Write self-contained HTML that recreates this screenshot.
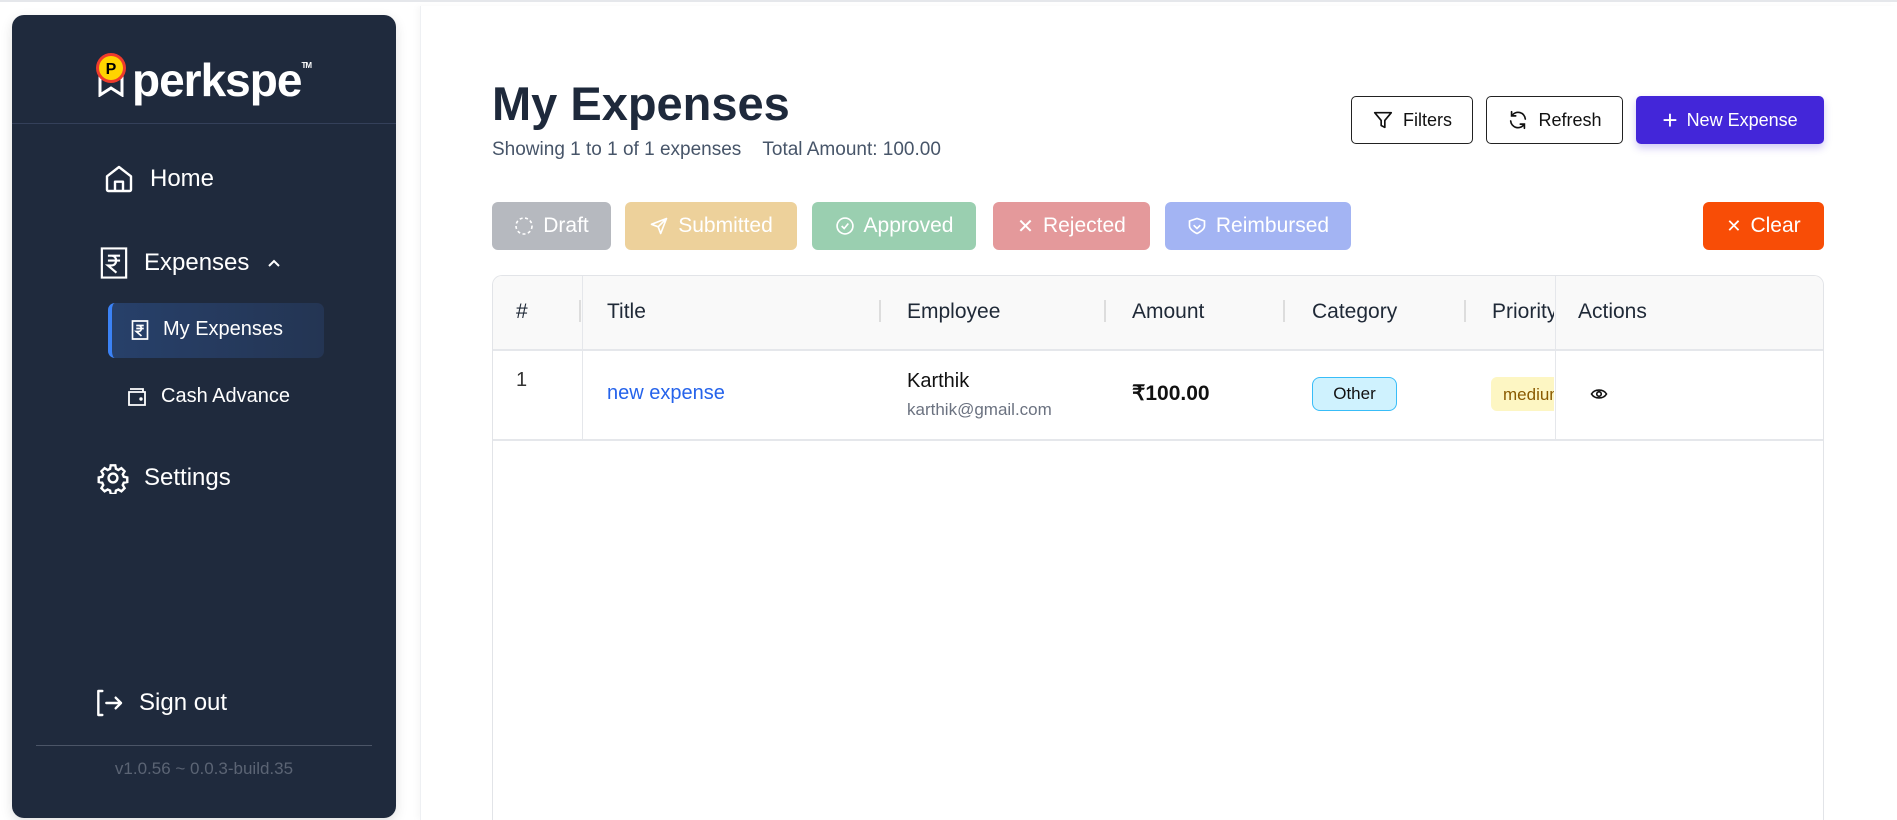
<!DOCTYPE html>
<html style="width:1897px;height:820px;overflow:hidden"><head><style>
*{box-sizing:border-box;margin:0;padding:0}
body{width:1897px;height:820px;overflow:hidden;background:#fff;font-family:"Liberation Sans",sans-serif;position:relative;border-top:2px solid #e5e7eb}
.a{position:absolute}
.sb{left:12px;top:13px;width:384px;height:803px;background:#1f2a3d;border-radius:12px;box-shadow:0 4px 12px rgba(0,0,0,.12);color:#fff}
.nav{position:absolute;display:flex;align-items:center;color:#fff;font-size:24px}
.main{left:420px;top:4px;width:1477px;height:814px;border-left:1px solid #eef0f3;box-shadow:-3px 0 6px rgba(0,0,0,.03)}
.btn{position:absolute;top:94px;height:48px;border:1px solid #222;border-radius:5px;display:flex;align-items:center;justify-content:center;gap:9px;font-size:18px;color:#111;background:#fff}
.chip{position:absolute;top:200px;height:48px;border-radius:6px;display:flex;align-items:center;justify-content:center;gap:9px;color:#fff;font-size:21px}
.th{position:absolute;top:298px;font-size:21px;color:#1f2937}
.sep{position:absolute;top:298px;width:2px;height:22px;background:#ddd}
</style></head><body>
<div class="a sb">
  <div class="a" style="left:82px;top:36px;width:34px;height:40px">
    <svg width="34" height="46" viewBox="0 0 34 46"><path d="M6 24 L6 44 L17 37 L28 44 L28 24" fill="none" stroke="#fff" stroke-width="3"/><circle cx="17" cy="17" r="15" fill="#ef3b2c"/><circle cx="17" cy="17" r="12" fill="#ffd400"/><text x="17" y="23" font-size="16" font-weight="bold" text-anchor="middle" fill="#000" font-family="Liberation Sans">P</text></svg>
  </div>
  <div class="a" style="left:120px;top:38px;font-size:46px;font-weight:bold;letter-spacing:-1px">perkspe<span style="font-size:8px;vertical-align:top;position:relative;top:8px">TM</span></div>
  <div class="a" style="left:0;top:108px;width:384px;height:1px;background:#34405a"></div>
  <div class="nav" style="left:91px;top:148px"><svg width="32" height="32" viewBox="0 0 24 24" fill="none" stroke="#fff" stroke-width="1.8" stroke-linejoin="round"><path d="M3 10 L12 3 L21 10 V20 a1 1 0 0 1-1 1 H4 a1 1 0 0 1-1-1Z M9 21 V14 H15 V21"/></svg><span style="margin-left:15px">Home</span></div>
  <div class="nav" style="left:87px;top:231px"><svg width="30" height="34" viewBox="0 0 24 28" fill="none" stroke="#fff" stroke-width="1.8"><path d="M2 2 H22 V26 H2Z"/><path d="M7 8 H17 M7 12 H17 M10 8 C15 8 15 16 10 16 H7 L14 22"/></svg><span style="margin-left:15px">Expenses</span><svg style="margin-left:18px" width="14" height="10" viewBox="0 0 14 10" fill="none" stroke="#fff" stroke-width="2"><path d="M2 8 L7 3 L12 8"/></svg></div>
  <div class="a" style="left:96px;top:288px;width:216px;height:55px;border-radius:7px;background:linear-gradient(90deg,#27406a,#243553);border-left:4px solid #3b82f6"></div>
  <div class="nav" style="left:119px;top:303px;font-size:20px"><svg width="18" height="22" viewBox="0 0 24 28" fill="none" stroke="#fff" stroke-width="2.2"><path d="M2 2 H22 V26 H2Z"/><path d="M7 8 H17 M7 12 H17 M10 8 C15 8 15 16 10 16 H7 L14 22"/></svg><span style="margin-left:14px">My Expenses</span></div>
  <div class="nav" style="left:115px;top:370px;font-size:20px"><svg width="20" height="20" viewBox="0 0 20 20" fill="none" stroke="#fff" stroke-width="1.8"><path d="M2 5 H18 V18 H2Z M3 2 H16 V5"/><circle cx="14" cy="12" r=".8" fill="#fff"/></svg><span style="margin-left:14px">Cash Advance</span></div>
  <div class="nav" style="left:85px;top:447px"><svg width="32" height="32" viewBox="0 0 24 24" fill="none" stroke="#fff" stroke-width="1.8"><path d="M10.3 2.5h3.4l.5 2.6 1.8.9 2.3-1.4 2.4 2.4-1.4 2.3.8 1.8 2.6.5v3.4l-2.6.5-.8 1.8 1.4 2.3-2.4 2.4-2.3-1.4-1.8.8-.5 2.6h-3.4l-.5-2.6-1.8-.8-2.3 1.4-2.4-2.4 1.4-2.3-.8-1.8-2.6-.5v-3.4l2.6-.5.8-1.8-1.4-2.3 2.4-2.4 2.3 1.4 1.8-.9z"/><circle cx="12" cy="12" r="3.3"/></svg><span style="margin-left:15px">Settings</span></div>
  <div class="nav" style="left:81px;top:672px"><svg width="32" height="32" viewBox="0 0 24 24" fill="none" stroke="#fff" stroke-width="1.8" stroke-linecap="round" stroke-linejoin="round"><path d="M7 3 H4 V21 H7 M10 12 H21 M17 8 L21 12 L17 16"/></svg><span style="margin-left:14px">Sign out</span></div>
  <div class="a" style="left:24px;top:730px;width:336px;height:1px;background:#4b5567"></div>
  <div class="a" style="left:0;width:384px;top:744px;text-align:center;color:#5b6474;font-size:17px">v1.0.56 ~ 0.0.3-build.35</div>
</div>
<div class="a main"></div>
<div class="a" style="left:492px;top:74px;font-size:47px;font-weight:bold;color:#1e293b">My Expenses</div>
<div class="a" style="left:492px;top:137px;font-size:19px;color:#475569">Showing 1 to 1 of 1 expenses &nbsp;&nbsp;&nbsp;Total Amount: 100.00</div>
<div class="btn" style="left:1351px;width:122px"><svg width="22" height="22" viewBox="0 0 24 24" fill="none" stroke="#111" stroke-width="1.8" stroke-linejoin="round"><path d="M3 4 H21 L14 12.5 V20 L10 18 V12.5Z"/></svg>Filters</div>
<div class="btn" style="left:1486px;width:137px"><svg width="22" height="22" viewBox="0 0 24 24" fill="none" stroke="#111" stroke-width="1.8" stroke-linecap="round"><path d="M20 11 A8 8 0 0 0 5.5 7 M4 13 A8 8 0 0 0 18.5 17 M5 3 V7.5 H9.5 M19 21 V16.5 H14.5"/></svg>Refresh</div>
<div class="btn" style="left:1636px;width:188px;background:#4326d9;border-color:#4326d9;color:#fff;box-shadow:0 4px 8px rgba(67,38,217,.25)"><span style="font-size:26px;font-weight:300">+</span>New Expense</div>
<div class="chip" style="left:492px;width:119px;background:#b6b9bf"><svg width="20" height="20"><circle cx="10" cy="10" r="8" fill="none" stroke="#fff" stroke-width="1.6" stroke-dasharray="3 2.5"/></svg>Draft</div>
<div class="chip" style="left:625px;width:172px;background:#edd19b"><svg width="20" height="20" viewBox="0 0 24 24" fill="none" stroke="#fff" stroke-width="2" stroke-linejoin="round"><path d="M21 3 L3 10 L11 13 L14 21Z M11 13 L21 3"/></svg>Submitted</div>
<div class="chip" style="left:812px;width:164px;background:#9acfb0"><svg width="20" height="20" viewBox="0 0 24 24" fill="none" stroke="#fff" stroke-width="2"><circle cx="12" cy="12" r="9.5"/><path d="M8 12 L11 15 L16 9"/></svg>Approved</div>
<div class="chip" style="left:993px;width:157px;background:#e4999b"><span style="font-size:20px">✕</span>Rejected</div>
<div class="chip" style="left:1165px;width:186px;background:#a3b4f3"><svg width="20" height="20" viewBox="0 0 24 24" fill="none" stroke="#fff" stroke-width="2"><path d="M3 6 L12 3 L21 6 V12 C21 17 12 21 12 21 C12 21 3 17 3 12Z M8 11 L12 15 L16 11"/></svg>Reimbursed</div>
<div class="chip" style="left:1703px;width:121px;background:#f84d06"><span style="font-size:18px">✕</span>Clear</div>
<div class="a" style="left:492px;top:273px;width:1332px;height:547px;border:1px solid #e2e4e8;border-bottom:none;border-radius:10px 10px 0 0;overflow:hidden">
  <div class="a" style="left:0;top:0;width:1332px;height:75px;background:#f9f9f9;border-bottom:2px solid #e5e7eb"></div>
  <div class="a" style="left:89px;top:0;width:1px;height:164px;background:#e5e7eb"></div>
  <div class="a" style="left:1062px;top:0;width:1px;height:164px;background:#e5e7eb"></div>
  <div class="a" style="left:0;top:163px;width:1332px;height:2px;background:#e5e7eb"></div>
</div>
<div class="th" style="left:516px">#</div>
<div class="sep" style="left:579px"></div>
<div class="th" style="left:607px">Title</div>
<div class="sep" style="left:879px"></div>
<div class="th" style="left:907px">Employee</div>
<div class="sep" style="left:1104px"></div>
<div class="th" style="left:1132px">Amount</div>
<div class="sep" style="left:1283px"></div>
<div class="th" style="left:1312px">Category</div>
<div class="sep" style="left:1464px"></div>
<div class="th" style="left:1492px;width:62px;overflow:hidden;white-space:nowrap">Priority</div>
<div class="th" style="left:1578px">Actions</div>
<div class="a" style="left:516px;top:367px;font-size:20px;color:#333">1</div>
<div class="a" style="left:607px;top:380px;font-size:20px;color:#2563eb">new expense</div>
<div class="a" style="left:907px;top:368px;font-size:20px;color:#111">Karthik</div>
<div class="a" style="left:907px;top:398px;font-size:17px;color:#6b7280">karthik@gmail.com</div>
<div class="a" style="left:1132px;top:379px;font-size:21px;font-weight:bold;color:#111">₹100.00</div>
<div class="a" style="left:1312px;top:375px;width:85px;height:34px;border:1px solid #38bdf8;background:#cff2fe;border-radius:8px;font-size:17px;color:#111;display:flex;align-items:center;justify-content:center">Other</div>
<div class="a" style="left:1491px;top:375px;width:63px;height:34px;background:#fdf6c3;border-radius:6px 0 0 6px;font-size:17px;color:#8a5a00;padding:8px 0 0 12px;overflow:hidden;white-space:nowrap">medium</div>
<svg class="a" style="left:1590px;top:384px" width="18" height="16" viewBox="0 0 24 20" fill="none" stroke="#111" stroke-width="2.2"><path d="M2 10 C6 3 18 3 22 10 C18 17 6 17 2 10Z"/><circle cx="12" cy="10" r="3"/></svg>
</body></html>
